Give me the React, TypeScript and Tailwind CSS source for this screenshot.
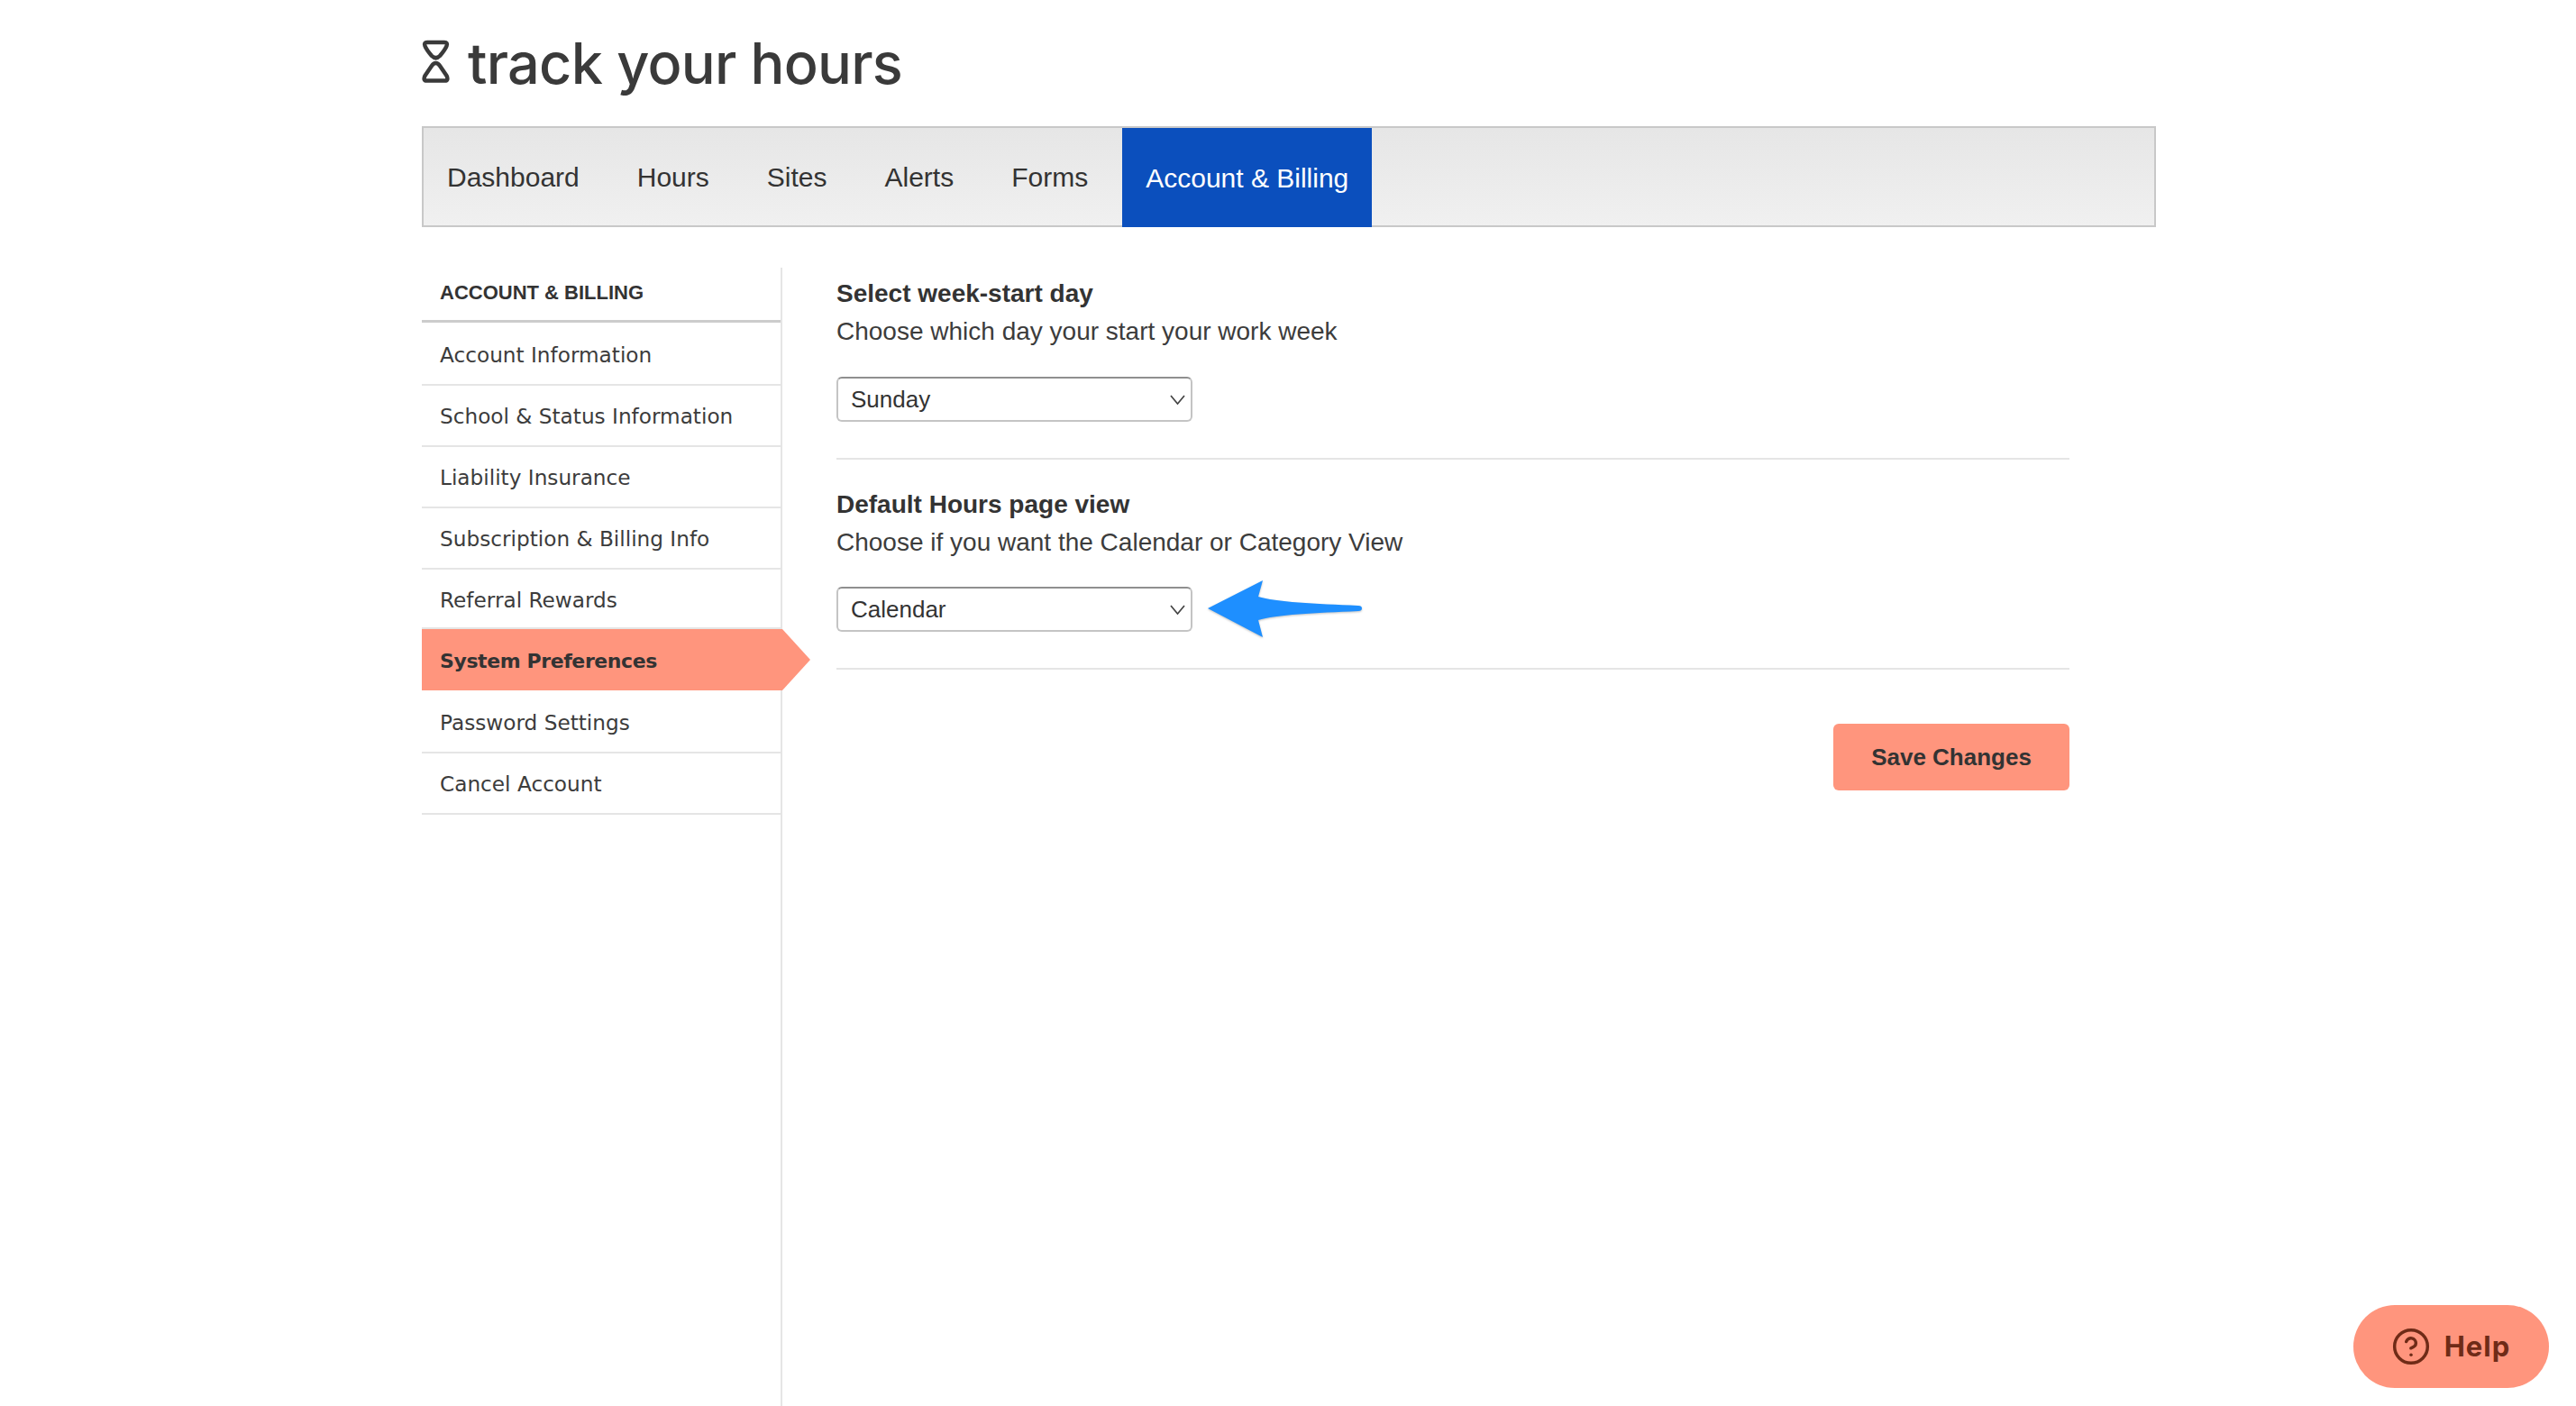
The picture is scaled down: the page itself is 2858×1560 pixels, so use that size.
import { CircleHelp } from 'lucide-react';

const tabs = ['Dashboard', 'Hours', 'Sites', 'Alerts', 'Forms'];

const sideItems = [
  { label: 'Account Information', height: 'h-[70px] pt-[4px]' },
  { label: 'School & Status Information', height: 'h-[68px] pt-[2px]' },
  { label: 'Liability Insurance', height: 'h-[68px] pt-[2px]' },
  { label: 'Subscription & Billing Info', height: 'h-[68px] pt-[2px]' },
  { label: 'Referral Rewards', height: 'h-[66px] pt-[4px]' },
  { label: 'System Preferences', height: 'h-[68px] pt-[2px]', active: true },
  { label: 'Password Settings', height: 'h-[70px] pt-[4px]' },
  { label: 'Cancel Account', height: 'h-[68px] pt-[2px]' },
];

function Logo() {
  return (
    <div className="flex items-start gap-[20px] pt-[44px] h-[140px]">
      <svg width="31" height="48" viewBox="0 0 31 48" fill="none" stroke="#3a3a3a" strokeWidth="4.5" strokeLinejoin="round">
        <path d="M6 3 H25 Q29 3 27.500 7 Q26 11 20 18 Q15.500 22.500 11 18 Q5 11 3.500 7 Q2 3 6 3 Z" />
        <path d="M15.500 26 Q18 26 20 29 L27.500 40 Q30 45.500 25.500 45.500 H5.500 Q1 45.500 3.500 40 L11 29 Q13 26 15.500 26 Z" />
      </svg>
      <span className="font-['Inter',sans-serif] font-medium text-[63px] leading-[48px] tracking-[-0.75px] text-[#3a3a3a] pt-[2px]">
        track your hours
      </span>
    </div>
  );
}

function NavBar() {
  return (
    <nav className="flex h-[112px] border-2 border-[#c8c8c8] bg-gradient-to-b from-[#e6e6e6] to-[#f0f0f0] gap-[12px]">
      {tabs.map((tab) => (
        <a key={tab} className="flex items-center px-[26px] text-[30px] text-[#333333]">
          {tab}
        </a>
      ))}
      <a className="flex items-center h-[110px] px-[26px] text-[30px] text-white bg-[#0b4fbd]">
        Account &amp; Billing
      </a>
    </nav>
  );
}

function Sidebar() {
  return (
    <aside className="w-[400px] mt-[45px] shrink-0 border-r-2 border-[#e5e5e5] min-h-[1263px]">
      <div className="h-[61px] border-b-[3px] border-[#cccccc] pl-[20px] pt-[13px] text-[22px] leading-[30px] font-bold text-[#333333]">
        ACCOUNT &amp; BILLING
      </div>
      {sideItems.map((item) =>
        item.active ? (
          <div
            key={item.label}
            className={`relative -mr-[2px] flex items-center pl-[20px] bg-[#ff957d] font-['DejaVu_Sans',sans-serif] font-bold text-[22px] tracking-[-0.4px] text-[#333333] ${item.height}`}
          >
            {item.label}
            <span className="absolute left-full top-0 border-y-[34px] border-l-[31px] border-y-transparent border-l-[#ff957d]" />
          </div>
        ) : (
          <div
            key={item.label}
            className={`flex items-center pl-[20px] font-['DejaVu_Sans',sans-serif] text-[23.200px] text-[#3c3c3c] border-b-2 border-[#e5e5e5] ${item.height}`}
          >
            {item.label}
          </div>
        )
      )}
    </aside>
  );
}

function PrefSelect({ value, options }: { value: string; options: string[] }) {
  return (
    <div className="relative w-[395px] h-[50px]">
      <select
        defaultValue={value}
        className="w-full h-full appearance-none bg-white rounded-[6px] border-2 border-[#c4c4c4] border-t-[#8f8f8f] pl-[14px] text-[26px] text-[#333333]"
      >
        {options.map((o) => (
          <option key={o}>{o}</option>
        ))}
      </select>
      <svg width="17" height="11" viewBox="0 0 17 11" fill="none" stroke="#444444" strokeWidth="1.700" className="absolute right-[8px] top-[20px] pointer-events-none">
        <path d="M1 1 L8.500 10 L16 1" />
      </svg>
    </div>
  );
}

function BlueArrow() {
  return (
    <svg width="173" height="65" viewBox="0 0 173 65" className="ml-[17px] -my-[8px] drop-shadow-[0_1px_1px_rgba(0,0,0,0.25)]">
      <path
        d="M0 31 L61 0 L56 18 C75 24 120 26 167 28 Q171 28 171 31 Q171 34 167 34 C120 36 75 38 56 44 L61 63 Z"
        fill="#1e8fff"
      />
    </svg>
  );
}

export default function App() {
  return (
    <div className="relative min-h-[1560px] bg-white font-['Liberation_Sans',Arial,sans-serif] overflow-hidden">
      <div className="ml-[468px] w-[1924px]">
        <Logo />
        <NavBar />
        <div className="flex">
          <Sidebar />
          <main className="ml-[60px] mt-[45px] w-[1368px] pt-[11px]">
            <h2 className="text-[28px] leading-[36px] font-bold text-[#333333]">Select week-start day</h2>
            <p className="mt-[6px] text-[28px] leading-[36px] text-[#3c3c3c]">Choose which day your start your work week</p>
            <div className="mt-[32px]">
              <PrefSelect value="Sunday" options={['Sunday', 'Monday']} />
            </div>
            <div className="mt-[40px] h-[2px] bg-[#e5e5e5]" />
            <h2 className="mt-[32px] text-[28px] leading-[36px] font-bold text-[#333333]">Default Hours page view</h2>
            <p className="mt-[6px] text-[28px] leading-[36px] text-[#3c3c3c]">Choose if you want the Calendar or Category View</p>
            <div className="mt-[31px] flex items-center">
              <PrefSelect value="Calendar" options={['Calendar', 'Category']} />
              <BlueArrow />
            </div>
            <div className="mt-[40px] h-[2px] bg-[#e5e5e5]" />
            <div className="mt-[60px] flex justify-end">
              <button className="w-[262px] h-[74px] rounded-[6px] bg-[#ff957d] text-[26px] font-bold text-[#333333]">
                Save Changes
              </button>
            </div>
          </main>
        </div>
      </div>
      <button className="absolute left-[2611px] top-[1448px] w-[217px] h-[92px] rounded-full bg-[#ff957d] flex items-center justify-center gap-[15px] font-['Inter',sans-serif] font-bold text-[31px] tracking-[1px] text-[#6f2b17]">
        <CircleHelp size={44} strokeWidth={1.900} className="-ml-[1px]" />
        Help
      </button>
    </div>
  );
}
